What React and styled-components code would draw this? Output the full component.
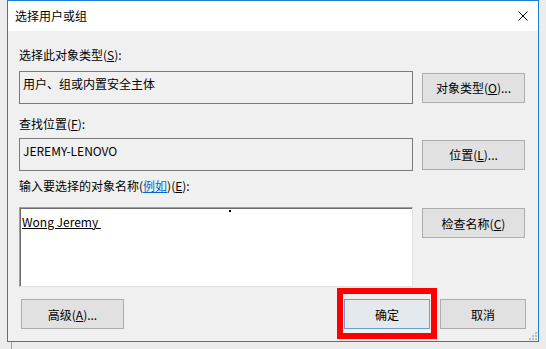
import styled, { createGlobalStyle } from "styled-components"

const GlobalStyle = createGlobalStyle`
    body {
        margin: 0;
        background: #ececec;
        font-family: "Noto Sans CJK SC", "Noto Sans", sans-serif;
        font-size: 12px;
        color: #000000;
    }
`

function CloseIcon() {
    return (
        <svg width="10" height="10" viewBox="0 0 10 10">
            <path d="M0.5 0.5 L9.5 9.5 M9.5 0.5 L0.5 9.5" stroke="#000" strokeWidth="1" fill="none" />
        </svg>
    )
}

function Grip() {
    const dots = [[6, 0], [3, 3], [6, 3], [0, 6], [3, 6], [6, 6]]
    return (
        <GripIcon width="8" height="8" viewBox="0 0 8 8">
            {dots.map(([x, y], i) => (
                <rect key={i} x={x} y={y} width="2" height="2" fill="#bdbdbd" />
            ))}
        </GripIcon>
    )
}

export default function App() {
    return (
        <>
            <GlobalStyle />
            <Dialog>
                <TitleBar>
                    <span>选择用户或组</span>
                    <CloseIcon />
                </TitleBar>
                <Body>
                    <Label $top={16}>选择此对象类型(<u>S</u>):</Label>
                    <Row $top={8}>
                        <ReadOnlyBox>用户、组或内置安全主体</ReadOnlyBox>
                        <Button>对象类型(<u>O</u>)...</Button>
                    </Row>
                    <Label $top={12}>查找位置(<u>F</u>):</Label>
                    <Row $top={6}>
                        <ReadOnlyBox>JEREMY-LENOVO</ReadOnlyBox>
                        <Button>位置(<u>L</u>)...</Button>
                    </Row>
                    <Label $top={7}>输入要选择的对象名称(<Link>例如</Link>)(<u>E</u>):</Label>
                    <Row $top={13} $start>
                        <NamesBox>
                            <Name>Wong Jeremy&nbsp;</Name>
                            <Caret />
                        </NamesBox>
                        <Button $shift>检查名称(<u>C</u>)</Button>
                    </Row>
                    <Footer>
                        <Button>高级(<u>A</u>)...</Button>
                        <FooterRight>
                            <Highlight>
                                <Button $default $narrow>确定</Button>
                            </Highlight>
                            <Button $narrow>取消</Button>
                        </FooterRight>
                    </Footer>
                </Body>
                <Grip />
            </Dialog>
            <BackWindow />
        </>
    )
}

const Dialog = styled.div`
    position: relative;
    box-sizing: border-box;
    width: 532px;
    height: 342px;
    margin-left: 7px;
    border: 1px solid #1c7fd6;
    background: #f0f0f0;
    display: flex;
    flex-direction: column;
`

const TitleBar = styled.div`
    height: 30px;
    background: #ffffff;
    display: flex;
    align-items: center;
    justify-content: space-between;
    padding: 0 10px 0 7px;
    line-height: 16px;
`

const Body = styled.div`
    display: flex;
    flex-direction: column;
    padding: 0 12px 0 11px;
`

const Label = styled.div`
    line-height: 16px;
    margin-top: ${(p) => p.$top}px;
    white-space: nowrap;
`

const Link = styled.span`
    color: #0066cc;
    text-decoration: underline;
`

const Row = styled.div`
    display: grid;
    grid-template-columns: 394px 103px;
    column-gap: 9px;
    align-items: ${(p) => (p.$start ? "start" : "center")};
    margin-top: ${(p) => p.$top}px;
`

const ReadOnlyBox = styled.div`
    box-sizing: border-box;
    height: 33px;
    border: 1px solid #7a7a7a;
    padding: 4px 3px;
    line-height: 16px;
    white-space: nowrap;
`

const NamesBox = styled.div`
    position: relative;
    box-sizing: border-box;
    height: 80px;
    background: #ffffff;
    border: 1px solid;
    border-color: #a0a0a0 #e3e3e3 #e3e3e3 #a0a0a0;
    box-shadow: inset 1px 1px 0 #6d6d6d;
    padding: 6px 2px;
    line-height: 16px;
`

const Name = styled.span`
    text-decoration: underline;
`

const Caret = styled.span`
    position: absolute;
    left: 209px;
    top: 2px;
    width: 2px;
    height: 2px;
    background: #000000;
`

const Button = styled.button`
    box-sizing: border-box;
    width: ${(p) => (p.$narrow ? "86px" : "103px")};
    height: 30px;
    margin-top: ${(p) => (p.$shift ? "1px" : "0")};
    padding: 0;
    font-family: inherit;
    font-size: 12px;
    color: #000000;
    background: ${(p) => (p.$default ? "#e4e9ed" : "#e1e1e1")};
    border: 1px solid ${(p) => (p.$default ? "#6a9fd2" : "#adadad")};
    white-space: nowrap;
`

const Footer = styled.div`
    display: flex;
    justify-content: space-between;
    margin-top: 12px;
    padding-left: 2px;
`

const FooterRight = styled.div`
    display: flex;
    gap: 10px;
`

const Highlight = styled.div`
    position: relative;
    &::after {
        content: "";
        position: absolute;
        inset: -11px -7px -10px -7px;
        border: 6px solid #ff0000;
        pointer-events: none;
    }
`

const GripIcon = styled.svg`
    position: absolute;
    right: 1px;
    bottom: 1px;
`

const BackWindow = styled.div`
    height: 7px;
    margin-left: 11px;
    border-left: 1px solid #a0a0a0;
`
